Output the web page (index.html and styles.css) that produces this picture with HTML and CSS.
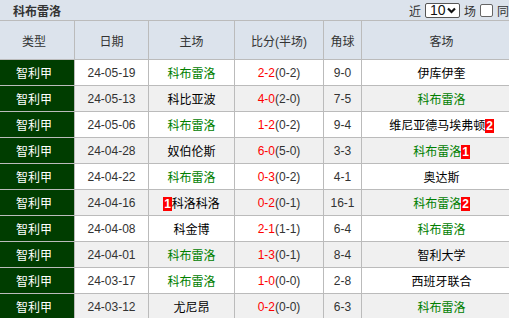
FILE: index.html
```html
<!DOCTYPE html>
<html lang="zh">
<head>
<meta charset="utf-8">
<title>科布雷洛</title>
<link rel="stylesheet" href="styles.css">
</head>
<body>
<div class="panel">
  <div class="titlebar">
    <span class="title">科布雷洛</span>
    <div class="controls">
      <span>近</span>
      <span class="select">10<svg width="9" height="7" viewBox="0 0 9 7"><path d="M1 1.5 L4.5 5 L8 1.5" fill="none" stroke="#111" stroke-width="2.2"/></svg></span>
      <span>场</span>
      <input type="checkbox" class="check">
      <span>同主客</span>
    </div>
  </div>
  <table class="matches">
    <colgroup>
      <col class="c-type"><col class="c-date"><col class="c-home"><col class="c-score"><col class="c-corner"><col class="c-away">
    </colgroup>
    <thead>
      <tr><th>类型</th><th>日期</th><th>主场</th><th>比分(半场)</th><th>角球</th><th>客场</th></tr>
    </thead>
    <tbody>
      <tr><td class="league">智利甲</td><td>24-05-19</td><td class="team self">科布雷洛</td><td><span class="ft">2-2</span>(0-2)</td><td>9-0</td><td class="team">伊库伊奎</td></tr>
      <tr class="alt"><td class="league">智利甲</td><td>24-05-13</td><td class="team">科比亚波</td><td><span class="ft">4-0</span>(2-0)</td><td>7-5</td><td class="team self">科布雷洛</td></tr>
      <tr><td class="league">智利甲</td><td>24-05-06</td><td class="team self">科布雷洛</td><td><span class="ft">1-2</span>(0-2)</td><td>9-4</td><td class="team">维尼亚德马埃弗顿<span class="card">2</span></td></tr>
      <tr class="alt"><td class="league">智利甲</td><td>24-04-28</td><td class="team">奴伯伦斯</td><td><span class="ft">6-0</span>(5-0)</td><td>3-3</td><td class="team self">科布雷洛<span class="card">1</span></td></tr>
      <tr><td class="league">智利甲</td><td>24-04-22</td><td class="team self">科布雷洛</td><td><span class="ft">0-3</span>(0-2)</td><td>4-1</td><td class="team">奥达斯</td></tr>
      <tr class="alt"><td class="league">智利甲</td><td>24-04-16</td><td class="team"><span class="card">1</span>科洛科洛</td><td><span class="ft">0-2</span>(0-1)</td><td>16-1</td><td class="team self">科布雷洛<span class="card">2</span></td></tr>
      <tr><td class="league">智利甲</td><td>24-04-08</td><td class="team">科金博</td><td><span class="ft">2-1</span>(1-1)</td><td>6-4</td><td class="team self">科布雷洛</td></tr>
      <tr class="alt"><td class="league">智利甲</td><td>24-04-01</td><td class="team self">科布雷洛</td><td><span class="ft">1-3</span>(0-1)</td><td>8-4</td><td class="team">智利大学</td></tr>
      <tr><td class="league">智利甲</td><td>24-03-17</td><td class="team self">科布雷洛</td><td><span class="ft">1-0</span>(0-0)</td><td>2-8</td><td class="team">西班牙联合</td></tr>
      <tr class="alt"><td class="league">智利甲</td><td>24-03-12</td><td class="team">尤尼昂</td><td><span class="ft">0-2</span>(0-0)</td><td>6-3</td><td class="team self">科布雷洛</td></tr>
    </tbody>
  </table>
</div>
</body>
</html>
```

FILE: styles.css
```css
html, body {
  margin: 0;
  padding: 0;
  overflow: hidden;
  background: #fff;
}
body {
  font-family: "Liberation Sans", "Noto Sans CJK SC", sans-serif;
  font-size: 12px;
  color: #333;
}
.panel {
  width: 528px;
  margin-left: -7px;
}
.titlebar {
  width: 548px;
  height: 20px;
  background: #dce3ec;
  display: flex;
  align-items: center;
  justify-content: space-between;
  box-sizing: border-box;
  padding-left: 20px;
  padding-right: 8px;
}
.title {
  font-weight: bold;
  color: #333;
}
.controls {
  display: flex;
  align-items: center;
  gap: 4px;
}
.select {
  display: inline-flex;
  align-items: center;
  justify-content: space-between;
  box-sizing: border-box;
  width: 35px;
  height: 15px;
  border: 1px solid #555;
  border-radius: 2px;
  background: #fff;
  padding: 0 3px 0 4px;
  font-size: 14px;
  color: #111;
  line-height: 13px;
}
.check {
  appearance: none;
  -webkit-appearance: none;
  margin: 0;
  width: 13px;
  height: 13px;
  box-sizing: border-box;
  border: 1px solid #666;
  border-radius: 2px;
  background: #fff;
}
.matches {
  border-collapse: collapse;
  table-layout: fixed;
  width: 528px;
}
.c-type { width: 81px; }
.c-date { width: 74px; }
.c-home { width: 86px; }
.c-score { width: 89px; }
.c-corner { width: 38px; }
.c-away { width: 160px; }
.matches th,
.matches td {
  border: 1px solid #bbb;
  padding: 0;
  text-align: center;
  white-space: nowrap;
}
.matches th {
  height: 38px;
  font-weight: normal;
  background: #dce3ec;
  color: #333;
}
.matches td {
  height: 25px;
  background: #fff;
}
.matches tr.alt td {
  background: #f0f0f0;
}
.matches td.league {
  background: #003d00;
  color: #fff;
}
.matches tr.alt td.league {
  background: #003d00;
}
.team {
  color: #000;
}
.team.self {
  color: #008000;
}
.ft {
  color: #f00;
}
.card {
  display: inline-block;
  background: #f00;
  color: #fff;
  font-weight: bold;
  font-size: 12px;
  line-height: 14px;
  padding: 0 1px;
  vertical-align: 0;
}
```
